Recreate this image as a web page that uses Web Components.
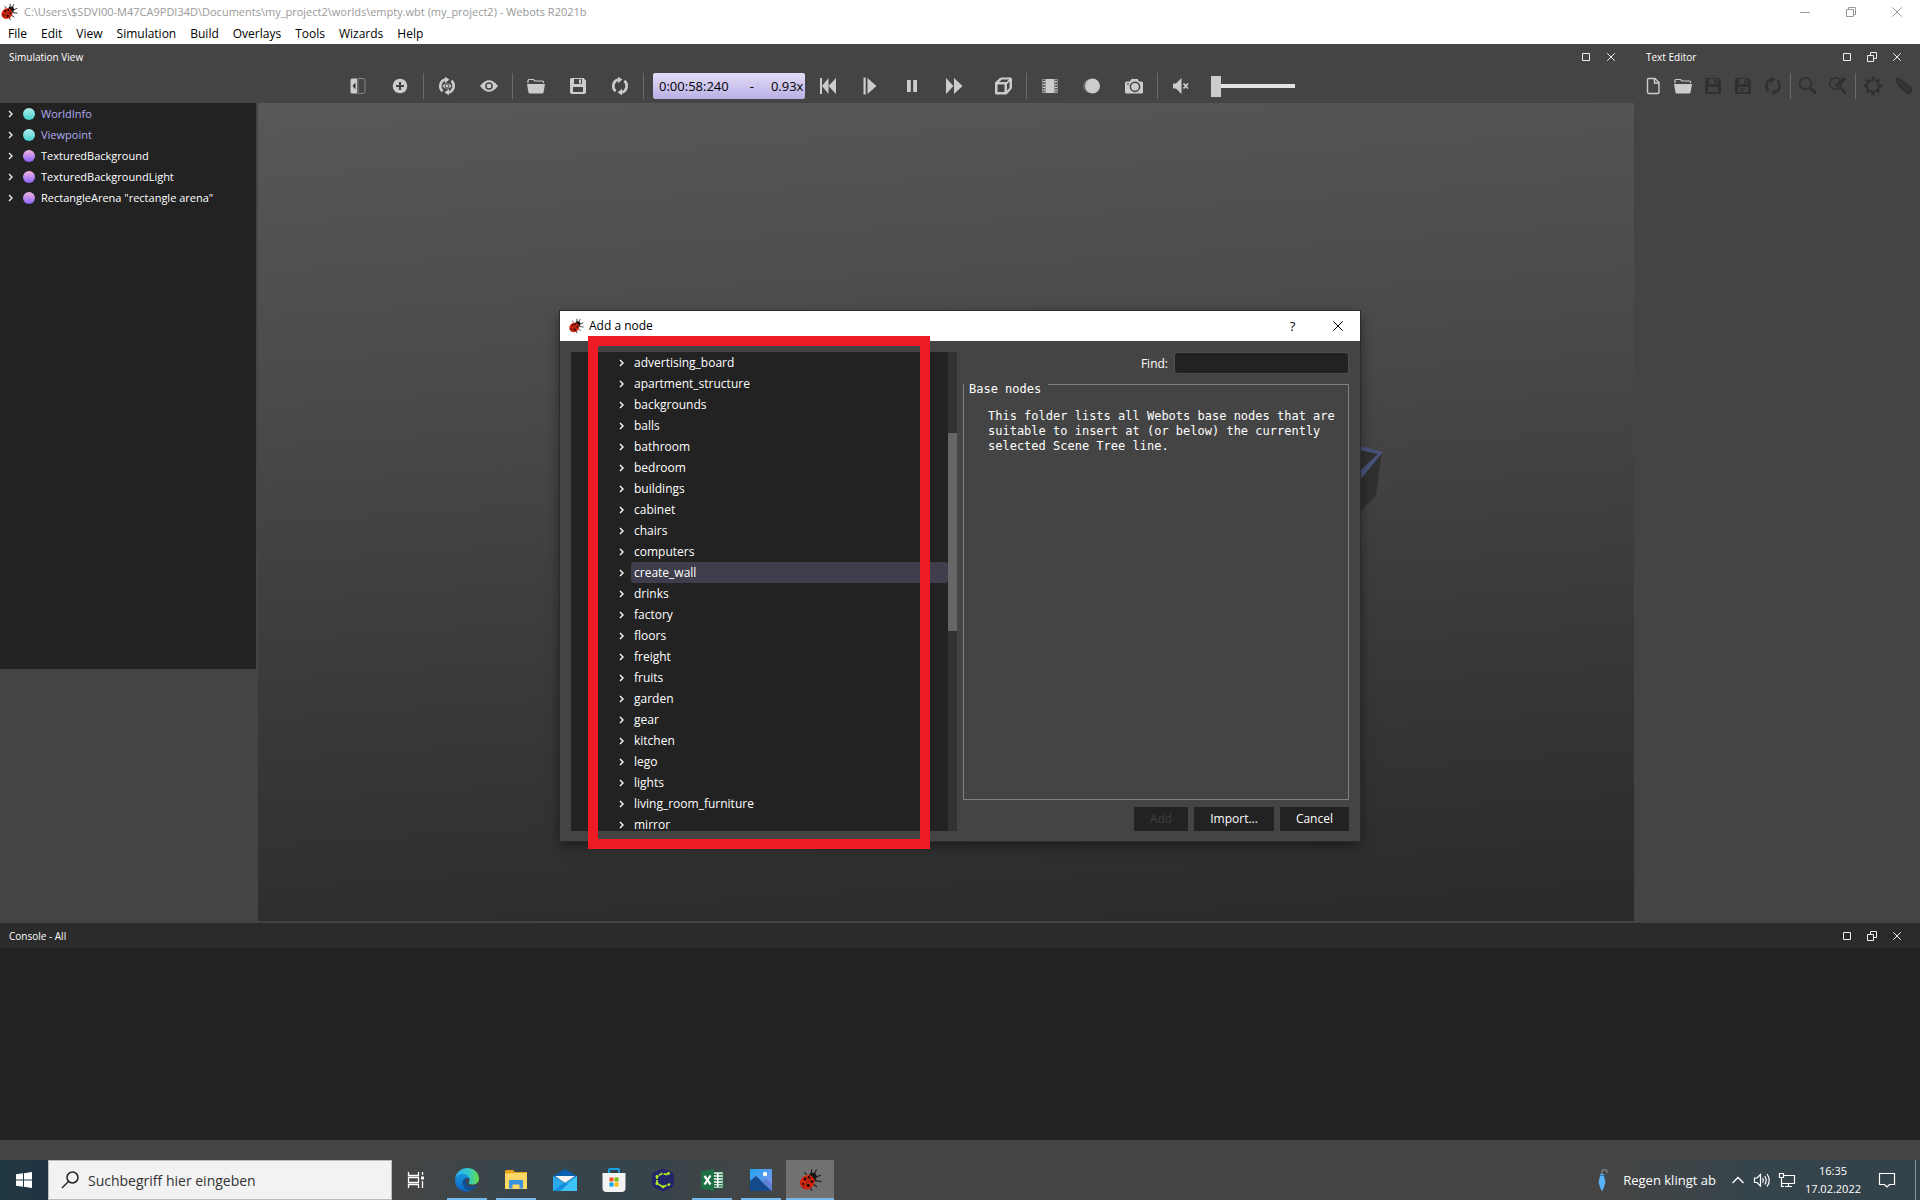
<!DOCTYPE html>
<html lang="de">
<head>
<meta charset="utf-8">
<title>Webots R2021b</title>
<style>
html,body{margin:0;height:100%;background:#444}
body{font:12px/16px "Open Sans","Noto Sans",sans-serif;overflow:hidden}
</style>
</head>
<body>
<webots-desktop></webots-desktop>
<script>
const reloadPath = '<path d="M5.6 15.2A6.8 6.8 0 0 1 8 3.6M14.4 4.8A6.8 6.8 0 0 1 12 16.4" fill="none" stroke="currentColor" stroke-width="2.6"/><path d="M8 .8v6.4l4.4-3.6zM12 19.2v-6.4l-4.4 3.6z"/>';
const floppy = '<path d="M3 2h12.5L18 4.500V16a2 2 0 0 1-2 2H4a2 2 0 0 1-2-2V4a2 2 0 0 1 1-2z"/><path d="M6 3h8v5H6zM5 11h10v5H5z" fill="#444"/><path d="M11 3.500h2v4h-2z"/>';
const bug = '<g fill="none" stroke="#222" stroke-width="1.100"><path d="M12 7L12.500 1M14 7L17 1.500M15 9l6-2.500M15 11.500l6.500 1M13 14l4.500 3.500M11 15l1.500 6M8 6L5.500 4"/></g><circle cx="13.500" cy="8" r="3.600" fill="#161616"/><ellipse cx="8.500" cy="13" rx="7" ry="6.300" transform="rotate(-40 8.500 13)" fill="#d8230f"/><path d="M4 18L13 8.500" stroke="#431" stroke-width=".8"/><g fill="#230b08"><circle cx="6.500" cy="10" r="1.400"/><circle cx="9.500" cy="16" r="1.500"/><circle cx="10" cy="8.500" r="1.200"/><circle cx="12.800" cy="12.500" r="1.300"/><circle cx="4.500" cy="14.500" r="1"/></g>';
const ICONS = {
  bug:[22,bug],
  min:[10,'<path d="M0 5.500h10" stroke="currentColor"/>'],
  restore:[10,'<path d="M.5 2.500h7v7h-7zM2.500 2.500v-2h7v7h-2" fill="none" stroke="currentColor"/>'],
  close:[10,'<path d="M.3.300l9.400 9.400M9.700.300L.3 9.700" fill="none" stroke="currentColor"/>'],
  max:[8,'<path d="M.5.500h7v7h-7z" fill="none" stroke="currentColor"/>'],
  dock:[10,'<path d="M.5 3.500h6v6h-6zM3.500 3.500v-3h6v6h-3" fill="none" stroke="currentColor"/>'],
  dclose:[8,'<path d="M.2.200l7.600 7.600M7.800.200L.2 7.800" fill="none" stroke="currentColor"/>'],
  chev:[8,'<path d="M2 1l3 3-3 3" fill="none" stroke="currentColor" stroke-width="1.400"/>'],
  side:[20,'<path d="M4 2.500h5v15H4a1.500 1.500 0 0 1-1.500-1.500V4A1.500 1.500 0 0 1 4 2.500z"/><path d="M7.500 6.500v7L4.500 10z" fill="#333"/><path d="M10 2.500h5a2 2 0 0 1 2 2v11a2 2 0 0 1-2 2h-5z" fill="none" stroke="#888"/>'],
  plus:[20,'<circle cx="10" cy="10" r="7.300"/><path d="M10 6v8M6 10h8" stroke="#444" stroke-width="2.200"/>'],
  reload:[20,reloadPath],
  reloadeye:[20,reloadPath+'<path d="M5 10q5-6 10 0q-5 6-10 0z" stroke="#444" stroke-width=".5"/><circle cx="10" cy="10" r="2" fill="none" stroke="#444"/>'],
  eye:[20,'<path d="M1 10q9-11.500 18 0q-9 11.500-18 0z"/><circle cx="10" cy="10" r="3.100" fill="none" stroke="#444" stroke-width="1.500"/>'],
  folder:[20,'<path d="M2 7V4.500Q2 3.500 3 3.500h4.500L9 5h7.500q1 0 1 1v1" fill="none" stroke="currentColor" stroke-width="1.200"/><path d="M1 8h18l-1.500 8.500q-.2 1-1.200 1H3.700q-1 0-1.200-1z"/>'],
  save:[20,floppy],
  saveas:[20,floppy+'<path d="M7 12.500h6M7 14.500h4" stroke="currentColor"/>'],
  rewind:[20,'<path d="M2 2h2v16H2zM10.500 2v16L4 10zM18 2v16l-7.500-8z"/>'],
  step:[20,'<path d="M3.500 1.500h2.200v17H3.500zM7.500 2v16l9-8z"/>'],
  pause:[20,'<path d="M5 4h3.800v12H5zM11.200 4H15v12h-3.800z"/>'],
  ff:[20,'<path d="M2 2v16l7.500-8zM10 2v16l8.500-8z"/>'],
  cube:[20,'<path d="M2 7q0-1 1-1.500L7 2q1-.5 2-.5h8.500q1.500 0 1.500 1.500v8.500q0 1-1 2l-3.500 4q-.5 1-2 1H3.500Q2 18.500 2 17z"/><path d="M4.500 8.500h7v7.500h-7zM6 6l3-2.500h7L13.500 6zM14 8l2.500-2.500V12L14 14.500z" fill="#444"/>'],
  film:[20,'<path d="M2.500 3h15v14h-15z"/><path d="M3.900 3.500v13M16.100 3.500v13" stroke="#333" stroke-width="1.600" stroke-dasharray="1.600 1.200"/><path d="M5.500 3v14M14.500 3v14" stroke="#777" stroke-width=".6"/>'],
  record:[20,'<circle cx="8" cy="10" r="7" fill="#686868"/><circle cx="10.500" cy="10" r="7.500"/>'],
  camera:[20,'<path d="M2.500 5.500h3.200L7.500 3h6l1.500 2.500h2.500q1.500 0 1.500 1.500v9q0 1.500-1.500 1.500h-15Q1 17.500 1 16V7q0-1.500 1.500-1.500z"/><circle cx="11" cy="10.800" r="4.600" fill="none" stroke="#444" stroke-width="1.500"/><circle cx="4" cy="7.800" r=".9" fill="#444"/>'],
  mute:[20,'<path d="M2 7.500h3L10.500 2v16L5 12.500H2z"/><path d="M12.500 7.500l4.500 5M17 7.500l-4.500 5" stroke="currentColor" stroke-width="1.800"/>'],
  doc:[20,'<path d="M5.500 2.500h6.500l4 4v9.500q0 1.500-1.500 1.500h-8.500q-1.500 0-1.500-1.500V4q0-1.500 1-1.500zM11.500 2.500v4.500h4.500" fill="none" stroke="currentColor" stroke-width="1.400"/>'],
  find:[20,'<circle cx="7.500" cy="7.500" r="5.800" fill="none" stroke="currentColor" stroke-width="1.600"/><path d="M11 12l1.500-1.500 6.500 6L17 18.800z"/>'],
  replace:[20,'<circle cx="7.500" cy="7.500" r="5.800" fill="none" stroke="currentColor" stroke-width="1.600"/><path d="M11 12l1.500-1.500 6.500 6L17 18.800zM7 11l1-3 8-7 2.500 2.500-8 7z"/>'],
  gear:[20,'<circle cx="10" cy="10" r="5.800" fill="none" stroke="currentColor" stroke-width="1.800"/><path d="M10 .8v4M10 15.200v4M.8 10h4M15.200 10h4M3.500 3.500l2.800 2.800M13.700 13.700l2.800 2.800M16.500 3.500l-2.800 2.800M6.300 13.700l-2.800 2.800" stroke="currentColor" stroke-width="2.800"/>'],
  brush:[20,'<path d="M2 4q2-4 6-1l11 9q1 3-2 6.500Q9 17 2 4z"/><path d="M4 4l11 11M6 3.500l11 10" stroke="#4a4a4a" stroke-width="1" stroke-dasharray="1.200 1.200"/>'],
  win:[24,'<path d="M4 6.300l7-1v6.200H4zM12 5.200L20 4v7.500h-8zM4 12.500h7v6.300l-7-1zM12 12.500h8V20l-8-1.200z" fill="#fff"/>'],
  search:[24,'<circle cx="14.500" cy="9.500" r="5.500" fill="none" stroke="#222" stroke-width="1.500"/><path d="M10.500 13.500L4 20" stroke="#222" stroke-width="1.500"/>'],
  taskview:[24,'<path d="M4.500 4v3.500h10V4M4.500 20v-3.500h10V20M4.500 9.500h10v5h-10zM18.500 4v3M18.500 13v7" fill="none" stroke="#fff" stroke-width="1.300"/><path d="M17 8.500h3v3h-3z" fill="#fff"/>'],
  edge:[24,'<defs><linearGradient id="a"><stop stop-color="#2aa6e8"/><stop offset=".55" stop-color="#30c8d0"/><stop offset="1" stop-color="#68dc45"/></linearGradient><linearGradient id="b" x2="0" y2="1"><stop stop-color="#1695df"/><stop offset="1" stop-color="#0b62bd"/></linearGradient></defs><path d="M0 11C1 4 6 0 12 0c7 0 12 5 12 10.500 0 4-3 6-6.500 6-3 0-4-1-3.500-2.300 1-1.500 1.200-6-4-7.200C5 6 1 8 0 11z" fill="url(#a)"/><path d="M0 12C.5 8 4 5.800 8 6c4 .2 7 3 7 6-.3-1-1.500-2-3-2-3 0-5 3-4 6.500 1.200 4 5 5.500 8.500 5.500C10 26 0 22 0 12z" fill="url(#b)"/><path d="M8 16c-1-3.500 1-6 4-6-2 2-1.500 8 5 8.300 2.500 0 4-.8 5-1.300-1 2.500-3.500 5-6.500 5.500C12 23 8.700 19 8 16z" fill="#124f91"/>'],
  files:[24,'<path d="M1 3.500Q1 2 2 2h7l2 2H23v16H1z" fill="#e8a317"/><path d="M1 5.500l10-.5h12v16H1z" fill="#ffd766"/><path d="M5 20.500V13q0-1 1-1h12q1 0 1 1v7.500h-3.500v-4h-7v4z" fill="#3b92dc"/>'],
  mail:[24,'<path d="M0 8L12 1l12 7v4H0z" fill="#0a5fb0"/><path d="M2 8h20L12 15z" fill="#f4f4f4"/><path d="M0 8l12 7L24 8v15H0z" fill="#2ba9ed"/><path d="M24 8L7 23h17z" fill="#3fc4f5"/><path d="M0 23l11-8.500 4 1.500-8 7z" fill="#178bdd"/>'],
  store:[24,'<path d="M7 6V2q0-1 1-1h8q1 0 1 1v4" fill="none" stroke="#1aa0e6" stroke-width="2"/><path d="M.5 5h23v15q0 4-4 4h-15q-4 0-4-4z" fill="#f3f3f3"/><path d="M7.500 9.500h4v4h-4z" fill="#f25022"/><path d="M12.500 9.500h4v4h-4z" fill="#7fba00"/><path d="M7.500 14.500h4v4h-4z" fill="#00a4ef"/><path d="M12.500 14.500h4v4h-4z" fill="#ffb900"/>'],
  hex:[24,'<path d="M12 .5l9 4q2 1 2 3V16q0 2-2 3.200l-9 4.500-9-4.500Q1 18 1 16V7.500q0-2 2-3z" fill="#25256b"/><path d="M16.500 6.500L11 5.500 6 8.500v7l6 3.300 6-2.300" fill="none" stroke="#a5e51c" stroke-width="1.800" stroke-dasharray="4 1"/><g fill="#b6f02a"><circle cx="17.500" cy="5.500" r="1.400"/><circle cx="6" cy="8.500" r="1.500"/><circle cx="6" cy="15.500" r="1.500"/><circle cx="12" cy="18.800" r="1.500"/><circle cx="18" cy="16.500" r="1.300"/></g>'],
  excel:[24,'<path d="M12 4h11v16H12z" fill="#fff" stroke="#1e7145" stroke-width=".8"/><path d="M14 6.500h3M14 9.500h3M14 12.500h3M14 15.500h3M14 18h3M18.500 6.500h4M18.500 9.500h4M18.500 12.500h4M18.500 15.500h4M18.500 18h4" stroke="#1e7145" stroke-width="1.300"/><path d="M1 3.500L14 1v22L1 20.500z" fill="#1e7145"/><path d="M4.500 8l6 8.500M10.500 7.500l-6 9" stroke="#fff" stroke-width="2.200"/>'],
  photos:[24,'<defs><linearGradient id="p" x2="1" y2="1"><stop stop-color="#21a5ee"/><stop offset="1" stop-color="#8d8ff0"/></linearGradient></defs><path d="M1 1h22v22H1z" fill="url(#p)"/><path d="M1 13l6-5 16 15H1z" fill="#14498c"/><path d="M13 14l4-3 6 5v7z" fill="#6080d6"/><circle cx="16" cy="6" r="2.200" fill="#fff"/>'],
  umbrella:[24,'<path d="M12 6V4q0-2.500 2.500-2.500T17 4v1" fill="none" stroke="#777" stroke-width="1.600"/><path d="M10 6h4v2l1.500 6-2 6.500-1.500 3-1.500-3-2-6.500L10 8z" fill="#5ab2f8"/><path d="M9.500 7.500h5" stroke="#2b6fb3"/>'],
  up:[16,'<path d="M2.500 11L8 5.500l5.500 5.500" fill="none" stroke="#fff" stroke-width="1.300"/>'],
  sound:[18,'<path d="M1.500 7v4.500H4L7.500 15V3.500L4 7zM9.500 7q1.500 2.200 0 4.500M11.700 5q3 4.200 0 8.500M14 3q4.500 6.200 0 12.500" fill="none" stroke="#fff" stroke-width="1.200"/>'],
  net:[18,'<path d="M5 4.500h11.500v8H3.500V8M7 15.500h7M10.500 12.500v3M1.500 2.500h4v4h-4zM3.500 6.500v9H6" fill="none" stroke="#fff" stroke-width="1.200"/>'],
  note:[18,'<path d="M1.500 2.500h15v11h-5l-2.500 2.500-2.500-2.500h-5z" fill="none" stroke="#fff" stroke-width="1.200"/>']
};
const RESET = `*{box-sizing:border-box}button{all:unset;box-sizing:border-box;display:flex;align-items:center;justify-content:center}ul{list-style:none;margin:0;padding:0}`;
function element(name, css, html){
  customElements.define(name, class extends HTMLElement{
    constructor(){
      super();
      const root=this.attachShadow({mode:'open'});
      root.innerHTML=`<style>${RESET}${css}</style>${typeof html==='function'?html(this):html}`;
    }
  });
}
const attr=(el,n,d='')=>el.getAttribute(n)??d;

element('wb-icon',':host{display:block;flex:none}svg{display:block}',el=>{
  const [box,body]=ICONS[attr(el,'name')], size=attr(el,'size',box);
  return `<svg width="${size}" height="${size}" viewBox="0 0 ${box} ${box}" fill="currentColor" aria-hidden="true">${body}</svg>`;
});
element('wb-tool',':host{display:block;width:var(--tool,42px);height:26px;color:#ccc}:host([off]){color:#303030}button{width:100%;height:100%}',
  el=>`<button aria-label="${attr(el,'name')}" ${el.hasAttribute('off')?'disabled':''}><wb-icon name="${attr(el,'name')}"></wb-icon></button>`);
element('wb-sep',':host{display:block;width:1px;height:26px;margin:0 2px;background:#6a6a6a}','');

element('wb-titlebar',`:host{display:flex;align-items:center;height:24px;background:#fff;color:#999;font-size:11px}
  wb-icon{margin:0 6px 0 0}.t{flex:1;white-space:nowrap}.b{display:flex}button{width:46px;height:22px}button wb-icon{margin:0}`,
  `<wb-icon name="bug" size="18"></wb-icon><span class="t"><slot></slot></span>
  <div class="b"><button aria-label="Minimize"><wb-icon name="min"></wb-icon></button><button aria-label="Restore"><wb-icon name="restore"></wb-icon></button><button aria-label="Close"><wb-icon name="close"></wb-icon></button></div>`);

element('wb-menubar',':host{display:block;background:#fff;color:#000;height:20px}nav{display:flex;gap:14px;padding:0 8px}button{height:20px}',
  `<nav>${['File','Edit','View','Simulation','Build','Overlays','Tools','Wizards','Help'].map(m=>`<button>${m}</button>`).join('')}</nav>`);

element('wb-panel-header',`:host{display:flex;align-items:center;height:25px;padding:0 11px 0 9px;color:#fff;font-size:10px}
  span{flex:1}button{width:25px;height:25px;color:#eee}`,
  el=>`<span><slot></slot></span>${attr(el,'tools').split(' ').map(t=>`<button aria-label="${t}"><wb-icon name="${t}"></wb-icon></button>`).join('')}`);

element('wb-clock',`:host{display:flex;align-items:center;width:152px;height:26px;margin:0 2px 0 7px;padding:0 6px;border-radius:2px;background:linear-gradient(#e2dcf8,#b9b0e4);color:#000;font-size:13px}
  span:nth-child(2){flex:1}.d{margin:0 17px 0 21px}`,
  '<span>0:00:58:240</span><span></span><span class="d">-</span><span>0.93x</span>');

element('wb-volume',`:host{display:block;margin-left:9px}input{appearance:none;display:block;width:84px;height:22px;margin:0;background:linear-gradient(#e1e4e1,#e1e4e1) center/100% 4px no-repeat}
  input::-webkit-slider-thumb{appearance:none;width:10px;height:21px;background:#ccc}`,
  '<input type="range" aria-label="Volume" min="0" max="100" value="0">');

element('wb-toolbar',':host{display:flex;align-items:center;height:34px;padding-left:1px}:host([center]){justify-content:center;padding:0 2px 0 0}','<slot></slot>');

element('wb-tree-item',`:host{display:flex;align-items:center;height:21px;color:#fff;white-space:nowrap;font-size:11px}
  i{width:12px;height:12px;border-radius:50%;margin:0 6px 0 8px;background:linear-gradient(#f5b5e0,#8862fb)}
  :host([base]){color:#b0acf0}:host([base]) i{background:linear-gradient(#aef0ee,#46cfce)}wb-icon{margin-left:7px;color:#eee}`,
  '<wb-icon name="chev"></wb-icon><i></i><slot></slot>');
element('wb-scene-tree',':host{display:flex;flex-direction:column;width:256px}div{flex:9 1 0;background:#222}:host::after{content:"";flex:4 1 0}',
  `<div role="tree"><wb-tree-item base>WorldInfo</wb-tree-item><wb-tree-item base>Viewpoint</wb-tree-item><wb-tree-item>TexturedBackground</wb-tree-item><wb-tree-item>TexturedBackgroundLight</wb-tree-item><wb-tree-item>RectangleArena "rectangle arena"</wb-tree-item></div>`);

element('wb-simulation',`:host{display:flex;flex-direction:column;flex:1;min-width:0}
  main{flex:1;display:flex;gap:2px;min-height:0;margin-bottom:2px}.view{flex:1;background:linear-gradient(176deg,#585858 0%,#4a4a4a 33%,#393939 67%,#2a2a2a 100%)}`,
  `<wb-panel-header tools="max dclose">Simulation View</wb-panel-header>
  <wb-toolbar center><wb-tool name="side"></wb-tool><wb-tool name="plus"></wb-tool><wb-sep></wb-sep><wb-tool name="reloadeye"></wb-tool><wb-tool name="eye"></wb-tool><wb-sep></wb-sep><wb-tool name="folder"></wb-tool><wb-tool name="save"></wb-tool><wb-tool name="reload"></wb-tool><wb-sep></wb-sep><wb-clock></wb-clock><wb-tool name="rewind"></wb-tool><wb-tool name="step"></wb-tool><wb-tool name="pause"></wb-tool><wb-tool name="ff"></wb-tool><wb-tool name="cube" style="margin-left:7px"></wb-tool><wb-sep></wb-sep><wb-tool name="film"></wb-tool><wb-tool name="record"></wb-tool><wb-tool name="camera"></wb-tool><wb-sep></wb-sep><wb-tool name="mute"></wb-tool><wb-volume></wb-volume></wb-toolbar>
  <main><wb-scene-tree></wb-scene-tree><div class="view"></div></main>`);

element('wb-editor',':host{display:block;width:283px;--tool:30px}',
  `<wb-panel-header tools="max dock dclose">Text Editor</wb-panel-header>
  <wb-toolbar><wb-tool name="doc"></wb-tool><wb-tool name="folder"></wb-tool><wb-tool off name="save"></wb-tool><wb-tool off name="saveas"></wb-tool><wb-tool off name="reload"></wb-tool><wb-sep></wb-sep><wb-tool off name="find"></wb-tool><wb-tool off name="replace"></wb-tool><wb-sep></wb-sep><wb-tool off name="gear"></wb-tool><wb-tool off name="brush"></wb-tool></wb-toolbar>`);

element('wb-console',':host{display:block;background:#2b2b2b}div{height:192px;background:#222}',
  '<wb-panel-header tools="max dock dclose">Console - All</wb-panel-header><div role="log"></div>');

const NODES=['advertising_board','apartment_structure','backgrounds','balls','bathroom','bedroom','buildings','cabinet','chairs','computers','create_wall','drinks','factory','floors','freight','fruits','garden','gear','kitchen','lego','lights','living_room_furniture','mirror'];
element('wb-node-list',`:host{display:flex;flex:none;width:386px;background:#222;color:#fff;font-size:12px;line-height:20px}
  ul{flex:1}li{display:flex;align-items:center;height:21px;padding-left:47px}li span{flex:1;margin-left:5px;padding:1px 0 0 3px;border-radius:3px}
  .on span{background:#403e4d}.bar{width:9px;padding-top:81px;background:#323232}.bar::before{content:"";display:block;height:198px;background:#666}`,
  `<ul role="tree">${NODES.map(n=>`<li role="treeitem"${n==='create_wall'?' class="on"':''}><wb-icon name="chev"></wb-icon><span>${n}</span></li>`).join('')}</ul><div class="bar"></div>`);

element('wb-dialog',`:host{display:flex;flex-direction:column;width:800px;height:530px;background:#444;color:#fff;outline:1px solid #2b2b2b;box-shadow:0 4px 12px rgba(0,0,0,.5)}
  header{display:flex;align-items:center;height:30px;padding-left:8px;background:#fff;color:#000}header span{flex:1;padding-left:5px}
  header button{width:45px;height:30px;font-size:13px}
  .body{flex:1;display:flex;gap:6px;padding:11px 11px 10px;min-height:0}.right{flex:1;display:flex;flex-direction:column;min-width:0}
  .find{display:flex;justify-content:flex-end;align-items:center;gap:6px;line-height:22px}label{padding-top:1px;height:22px}input{width:175px;height:22px;border:1px solid #505050;border-radius:3px;background:#222;color:#fff;font:inherit}
  fieldset{flex:1;margin:0 0 7px;padding:15px 0 0 24px;border:1px solid #808080;font:12px/15px "DejaVu Sans Mono","Liberation Mono",monospace;min-width:0}
  legend{margin-left:-24px;padding:10px 7px 0 5px;height:20px;line-height:10px;background:#444}p{margin:0;white-space:nowrap}
  footer{display:flex;justify-content:flex-end;gap:6px}footer button{height:24px;padding:0 16px;background:#222}footer button:disabled{color:#3d3d3d}`,
  `<header><wb-icon name="bug" size="16"></wb-icon><span>Add a node</span><button aria-label="Help">?</button><button aria-label="Close"><wb-icon name="close"></wb-icon></button></header>
  <div class="body"><wb-node-list></wb-node-list><div class="right">
  <div class="find"><label for="find">Find:</label><input id="find" type="text"></div>
  <fieldset><legend>Base nodes</legend><p>This folder lists all Webots base nodes that are<br>suitable to insert at (or below) the currently<br>selected Scene Tree line.</p></fieldset>
  <footer><button disabled>Add</button><button>Import...</button><button>Cancel</button></footer></div></div>`);

element('wb-app-button',`:host{display:block;width:48px;height:40px}button{width:48px;height:40px;position:relative}
  :host([open]) button::after{content:"";position:absolute;bottom:0;left:4px;right:4px;height:2px;background:#76b9ed}
  :host([active]) button{background:#727272}:host([active]) button::after{left:0;right:0}`,
  el=>`<button aria-label="${attr(el,'name')}"><wb-icon name="${attr(el,'name')}" size="${attr(el,'size',24)}"></wb-icon></button>`);
element('wb-taskbar',`:host{display:flex;height:40px;align-items:center;color:#fff;background:linear-gradient(90deg,#203840 0,#234 48px,#444 400px,#3a464b 500px,#35444a 630px,#454545 780px,#444 84%,#36454b 91%,#33424a 100%)}
  .search{display:flex;align-items:center;width:344px;height:40px;padding-left:9px;gap:6px;background:#f2f2f2;border:1px solid #bbb}
  input{flex:1;min-width:0;border:0;outline:0;background:none;padding:1px 0 0;font:14px/20px "Open Sans",sans-serif;color:#333}input::placeholder{color:#333;opacity:1}
  .apps{display:flex;gap:1px;flex:1}.apps :first-child{margin-right:2px}
  .weather{display:flex;align-items:center;gap:9px;font-size:13px;margin-right:14px}.tray{display:flex;gap:7px;align-items:center}
  time{text-align:center;font-size:11px;line-height:18px;margin:0 17px 0 9px}.end{margin-left:19px;width:1px;height:40px;background:#899;margin-right:4px}`,
  `<wb-app-button name="win"></wb-app-button>
  <label class="search"><wb-icon name="search"></wb-icon><input type="search" aria-label="Suche" placeholder="Suchbegriff hier eingeben"></label>
  <div class="apps"><wb-app-button name="taskview"></wb-app-button><wb-app-button open name="edge"></wb-app-button><wb-app-button open name="files"></wb-app-button><wb-app-button name="mail"></wb-app-button><wb-app-button name="store"></wb-app-button><wb-app-button name="hex"></wb-app-button><wb-app-button open name="excel"></wb-app-button><wb-app-button open name="photos"></wb-app-button><wb-app-button open active name="bug"></wb-app-button></div>
  <div class="weather"><wb-icon name="umbrella"></wb-icon><span>Regen klingt ab</span></div>
  <div class="tray"><wb-icon name="up"></wb-icon><wb-icon name="sound"></wb-icon><wb-icon name="net"></wb-icon></div>
  <time>16:35<br>17.02.2022</time><wb-icon name="note"></wb-icon><div class="end"></div>`);

element('webots-desktop',`:host{display:flex;flex-direction:column;height:100vh;position:relative;background:#444}
  .work{flex:1;display:flex;gap:3px;min-height:0}wb-console{margin-bottom:20px}
  .arena{position:absolute;left:1350px;top:440px}wb-dialog{position:absolute;top:311px;left:calc(50% - 400px)}
  .mark{position:absolute;left:calc(50% - 372px);top:336px;width:342px;height:513px;border:10px solid #ed1c24;pointer-events:none;box-sizing:border-box}`,
  `<wb-titlebar>C:\\Users\\$SDVI00-M47CA9PDI34D\\Documents\\my_project2\\worlds\\empty.wbt (my_project2) - Webots R2021b</wb-titlebar>
  <wb-menubar></wb-menubar>
  <div class="work"><wb-simulation></wb-simulation><wb-editor></wb-editor></div>
  <wb-console></wb-console><wb-taskbar></wb-taskbar>
  <svg class="arena" width="40" height="80" viewBox="0 0 40 80" aria-hidden="true"><path d="M0 10L32 12l-6 44L0 80z" fill="#303030"/><path d="M0 3l33 9L10 40 0 50V40L28 14 0 8z" fill="#49527a"/></svg>
  <wb-dialog></wb-dialog><div class="mark"></div>`);
</script>
</body>
</html>
